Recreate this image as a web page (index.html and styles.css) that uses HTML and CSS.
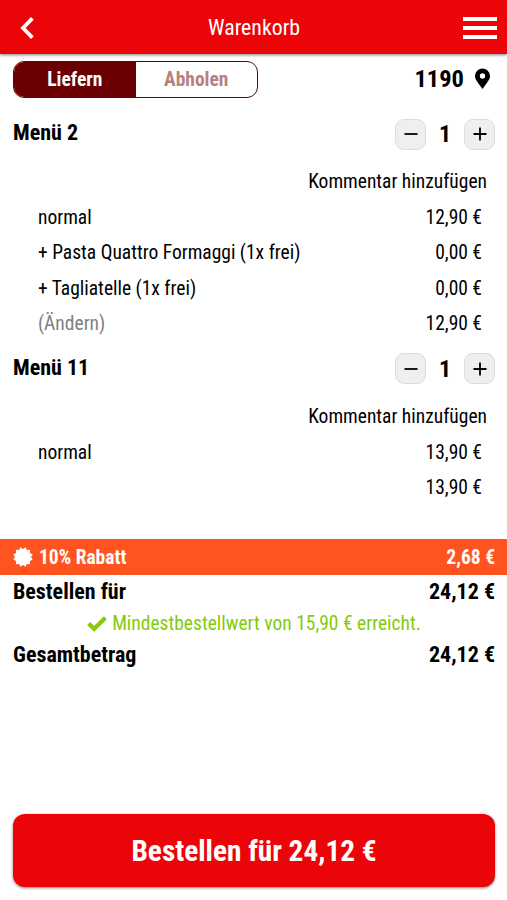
FILE: index.html
```html
<!DOCTYPE html>
<html lang="de">
<head>
    <meta charset="UTF-8">
    <meta name="viewport" content="width=device-width, initial-scale=1.0">
    <title>Warenkorb</title>
    <link rel="stylesheet" href="styles.css">
</head>
<body>
    <header class="topbar">
        <svg class="back" viewBox="0 0 14 22"><path d="M12.4 1.4L3 11L12.4 20.6" fill="none" stroke="#fff" stroke-width="3.8"/></svg>
        <h1><span class="text">Warenkorb</span></h1>
        <div class="menu-icon"><i></i><i></i><i></i></div>
    </header>

    <div class="delivery">
        <div class="switch">
            <div class="option active"><span class="text">Liefern</span></div>
            <div class="option"><span class="text">Abholen</span></div>
        </div>
        <div class="zip">
            <span class="text">1190</span>
            <svg class="pin" viewBox="0 0 384 512"><path d="M172 502C27 291 0 270 0 192a192 192 0 0 1 384 0c0 78-27 99-172 310a24 24 0 0 1-40 0zM192 260a68 68 0 1 0 0-136 68 68 0 0 0 0 136z"/></svg>
        </div>
    </div>

    <main class="cart">
        <section class="item">
            <div class="item-head">
                <h2><span class="text">Menü 2</span></h2>
                <div class="amount">
                    <button class="step"><svg viewBox="0 0 14 14"><path d="M0.5 7h13"/></svg></button>
                    <span class="count text">1</span>
                    <button class="step"><svg viewBox="0 0 14 14"><path d="M0.5 7h13M7 0.5v13"/></svg></button>
                </div>
            </div>
            <div class="comment"><span class="text">Kommentar hinzufügen</span></div>
            <div class="row"><span class="text">normal</span><span class="text">12,90 €</span></div>
            <div class="row"><span class="text">+ Pasta Quattro Formaggi (1x frei)</span><span class="text">0,00 €</span></div>
            <div class="row"><span class="text">+ Tagliatelle (1x frei)</span><span class="text">0,00 €</span></div>
            <div class="row"><span class="text change">(Ändern)</span><span class="text">12,90 €</span></div>
        </section>

        <section class="item">
            <div class="item-head">
                <h2><span class="text">Menü 11</span></h2>
                <div class="amount">
                    <button class="step"><svg viewBox="0 0 14 14"><path d="M0.5 7h13"/></svg></button>
                    <span class="count text">1</span>
                    <button class="step"><svg viewBox="0 0 14 14"><path d="M0.5 7h13M7 0.5v13"/></svg></button>
                </div>
            </div>
            <div class="comment"><span class="text">Kommentar hinzufügen</span></div>
            <div class="row"><span class="text">normal</span><span class="text">13,90 €</span></div>
            <div class="row"><span></span><span class="text">13,90 €</span></div>
        </section>
    </main>

    <div class="discount">
        <svg class="badge" viewBox="0 0 20 20"><path d="M10 2L12.6 0.3L13.9 2.9L17 2.8L17 6L19.7 7.4L18 10L19.7 12.6L17 14L17 17.2L13.9 17.1L12.6 19.7L10 18L7.4 19.7L6.1 17.1L3 17.2L3 14L0.3 12.6L2 10L0.3 7.4L3 6L3 2.8L6.1 2.9L7.4 0.3Z"/></svg>
        <span class="text">10% Rabatt</span>
        <span class="text value">2,68 €</span>
    </div>

    <div class="totals">
        <div class="total"><span class="text">Bestellen für</span><span class="text">24,12 €</span></div>
        <div class="minimum">
            <svg class="check" viewBox="0 0 20 16"><path d="M1.6 7.6L7.2 12.8L18.4 1.8" fill="none" stroke="#84cb0a" stroke-width="4.2"/></svg>
            <span class="text">Mindestbestellwert von 15,90 € erreicht.</span>
        </div>
        <div class="total"><span class="text">Gesamtbetrag</span><span class="text">24,12 €</span></div>
    </div>

    <button class="order"><span class="text">Bestellen für 24,12 €</span></button>
</body>
</html>
```
FILE: styles.css
```css
* {
    box-sizing: border-box;
}

body {
    margin: 0;
    height: 900px;
    display: flex;
    flex-direction: column;
    font-family: "Roboto Condensed", Roboto, sans-serif;
    font-stretch: 75%;
    font-size: 19.5px;
    color: #000;
    background-color: #fff;
    overflow: hidden;
}

h1, h2 {
    margin: 0;
}

button {
    font: inherit;
    border: none;
    padding: 0;
}

.text {
    white-space: nowrap;
}

.topbar {
    height: 54px;
    flex: none;
    display: flex;
    align-items: center;
    justify-content: space-between;
    padding: 1px 10px 0 20px;
    color: #fff;
    background-color: #eb0508;
    box-shadow: 0 1px 3px rgba(0, 0, 0, 0.5);
}

.topbar h1 {
    font-size: 21.8px;
    font-weight: 400;
}

.back {
    width: 14px;
    height: 22px;
    margin-right: 11px;
}

.menu-icon {
    width: 34px;
    display: flex;
    flex-direction: column;
    gap: 5px;
}

.menu-icon i {
    height: 4px;
    background-color: #fff;
}

.delivery {
    display: flex;
    justify-content: space-between;
    padding: 7px 17px 0 13px;
}

.switch {
    width: 245px;
    height: 37px;
    display: flex;
    border: 1px solid #6b0003;
    border-radius: 11px;
    overflow: hidden;
}

.option {
    flex: 1;
    display: flex;
    align-items: center;
    justify-content: center;
    padding-bottom: 1px;
    font-weight: 700;
    color: #b98080;
}

.option.active {
    color: #fff;
    background-color: #6b0003;
}

.zip {
    display: flex;
    align-items: center;
    gap: 11px;
    padding-bottom: 2px;
    font-size: 24.5px;
    font-weight: 700;
}

.pin {
    width: 15px;
    height: 21px;
}

.cart {
    padding: 18px 12px 0 13px;
}

.item {
    padding-bottom: 9px;
}

.item-head {
    height: 37px;
    display: flex;
    justify-content: space-between;
}

.item-head h2 {
    font-size: 22px;
    line-height: 34px;
}

.amount {
    display: flex;
    align-items: center;
    padding-bottom: 1px;
}

.count {
    width: 38px;
    text-align: center;
    font-size: 24px;
    font-weight: 700;
}

.step {
    width: 31px;
    height: 31px;
    display: flex;
    align-items: center;
    justify-content: center;
    border: 1px solid #dcdcdc;
    border-radius: 9px;
    background-color: #efefef;
}

.step svg {
    width: 14px;
    height: 14px;
    stroke: #000;
    stroke-width: 1.8;
}

.comment {
    height: 47px;
    line-height: 58px;
    padding-right: 8px;
    text-align: right;
}

.row {
    height: 35.4px;
    line-height: 35.4px;
    display: flex;
    justify-content: space-between;
    padding: 0 13px 0 25px;
}

.change {
    color: #808080;
}

.discount {
    height: 36px;
    margin-top: 25px;
    display: flex;
    align-items: center;
    gap: 6px;
    padding: 0 12px 0 13px;
    font-weight: 700;
    color: #fff;
    background-color: #ff5420;
}

.badge {
    width: 20px;
    height: 20px;
    fill: #fff;
}

.value {
    margin-left: auto;
}

.totals {
    padding: 1px 12px 0 13px;
}

.total {
    height: 31px;
    line-height: 31px;
    display: flex;
    justify-content: space-between;
    font-size: 22px;
    font-weight: 700;
}

.minimum {
    height: 32px;
    display: flex;
    align-items: center;
    justify-content: center;
    gap: 5px;
    padding-top: 1px;
    color: #84cb0a;
}

.check {
    width: 20px;
    height: 16px;
}

.order {
    height: 73px;
    flex: none;
    margin: auto 12px 13px 13px;
    border-radius: 12px;
    font-size: 29.3px;
    font-weight: 700;
    color: #fff;
    background-color: #eb0508;
    box-shadow: 0 1px 3px rgba(0, 0, 0, 0.5);
}
```
